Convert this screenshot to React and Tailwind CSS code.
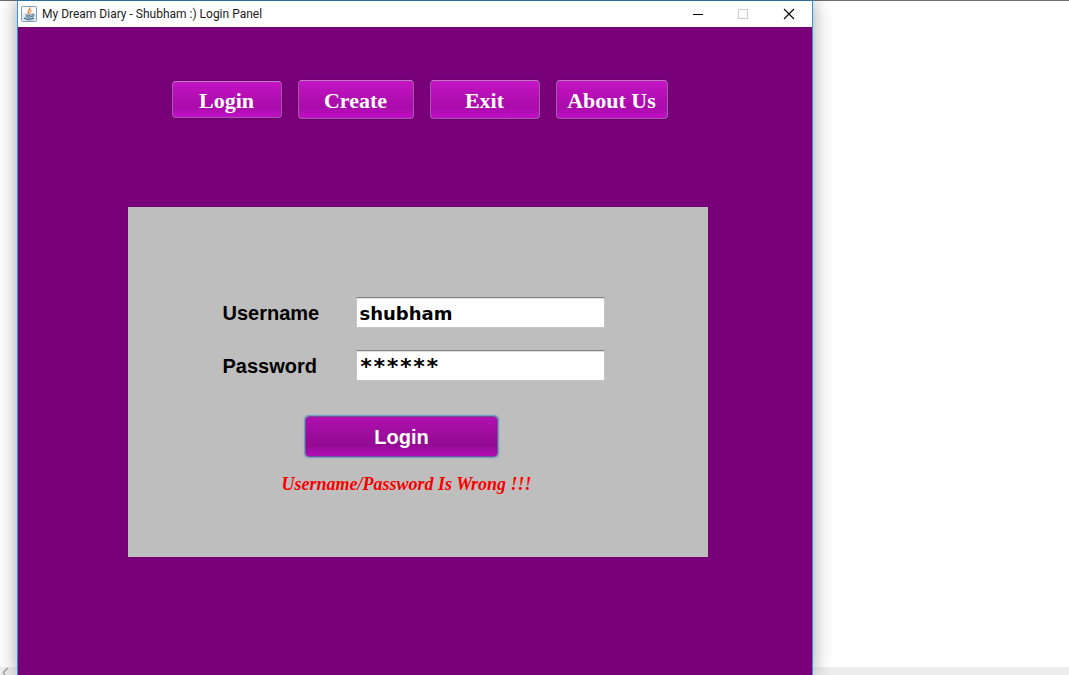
import React, { useState } from "react";

const NAV_BASE =
  "rounded border border-[#a656ac] border-t-[#bd7cc4] bg-linear-to-b from-[#c414c4] via-[#a90ba9] via-70% to-[#c010c6] pt-0.5 font-['Liberation_Serif',serif] text-[22px] leading-6 font-bold whitespace-nowrap text-white shadow-[0_0_2px_#5c005c]";

const NAV_ITEMS = [
  { label: "Login", size: "h-[37px] w-[110px]" },
  { label: "Create", size: "h-[39px] w-[116px]" },
  { label: "Exit", size: "h-[39px] w-[110px]" },
  { label: "About Us", size: "h-[39px] w-[112px]" },
];

function JavaIcon() {
  return (
    <svg width="16" height="16" viewBox="0 0 16 16" aria-hidden="true">
      <rect x="0.5" y="0.5" width="15" height="15" rx="1" fill="#e6ebef" stroke="#7f9db5" />
      <path d="M1 1h14v6H1z" fill="#f7f9fa" />
      <g fill="none" strokeLinecap="round">
        <path d="M9 2C9.6 4 5.6 4.7 7.6 7.8" stroke="#e58a3c" strokeWidth="1.5" />
        <path d="M10.4 4.3C8.4 5.2 9.6 6.2 8.8 7.8" stroke="#e8a367" strokeWidth="1.2" />
        <path d="M4.6 8.8c1.6.6 4.4.6 6.2 0M5.2 10.6c1.4.5 3.6.5 5.2 0" stroke="#557c9c" strokeWidth="1.2" />
        <path d="M11.4 8.4c2-.3 1.7 1.7-.4 2.3" stroke="#557c9c" strokeWidth="1.2" />
        <path d="M3.4 12.2c1.6 1.3 6.8 1.3 9.2 0" stroke="#416b8d" strokeWidth="1.4" />
        <path d="M5 14.1c2 .4 4.8.3 7-.2" stroke="#91aabd" strokeWidth="0.7" />
      </g>
    </svg>
  );
}

function WindowButton({ label, disabled, children }) {
  return (
    <button
      type="button"
      aria-label={label}
      disabled={disabled}
      className="flex h-full w-[46px] items-center justify-center"
    >
      <svg width="12" height="12" viewBox="0 0 12 12" fill="none" aria-hidden="true">
        {children}
      </svg>
    </button>
  );
}

function TitleBar() {
  return (
    <header className="flex h-[26px] items-center bg-white pl-[3px]">
      <JavaIcon />
      <h1 className="flex-1 truncate pl-[5px] font-['Roboto','Noto_Sans',sans-serif] text-[12px] leading-4 text-[#1c1c1c]">
        My Dream Diary - Shubham :) Login Panel
      </h1>
      <div className="flex h-full">
        <WindowButton label="Minimize">
          <path d="M2 6.5h10" stroke="#000" />
        </WindowButton>
        <WindowButton label="Maximize" disabled>
          <rect x="1.5" y="1.5" width="9" height="9" stroke="#cccccc" />
        </WindowButton>
        <WindowButton label="Close">
          <path d="M1 1l10 10M11 1L1 11" stroke="#000" strokeWidth="1.1" />
        </WindowButton>
      </div>
    </header>
  );
}

function Field({ id, label, value, onChange, inputClass }) {
  return (
    <>
      <label htmlFor={id} className="font-['Liberation_Sans',sans-serif] text-[20px] leading-6 font-bold text-black">
        {label}
      </label>
      <input
        id={id}
        type="text"
        autoComplete="off"
        value={value}
        onChange={(event) => onChange(event.target.value)}
        className={`h-[31px] w-full border border-[#c4c4c4] border-t-[#858585] bg-white px-[3px] pt-0.5 font-bold text-black shadow-[inset_0_1px_0_#dddddd] outline-none ${inputClass}`}
      />
    </>
  );
}

function LoginForm() {
  const [username, setUsername] = useState("shubham");
  const [password, setPassword] = useState("******");
  return (
    <form
      onSubmit={(event) => event.preventDefault()}
      className="h-[350px] w-full max-w-[580px] bg-[#bebebe] pt-[90px] pr-[103px] pl-[95px]"
    >
      <div className="grid grid-cols-[133px_1fr] items-center gap-y-[22px]">
        <Field
          id="username"
          label="Username"
          value={username}
          onChange={setUsername}
          inputClass="font-['DejaVu_Sans',sans-serif] text-[18px]"
        />
        <Field
          id="password"
          label="Password"
          value={password}
          onChange={setPassword}
          inputClass="font-['DejaVu_Sans_Mono',monospace] text-[22px]"
        />
      </div>
      <div className="flex flex-col items-center pt-[35px] pr-6">
        <button
          type="submit"
          className="h-[41px] w-[193px] rounded border border-[#76509b] bg-linear-to-b from-[#b010b0] via-[#930b93] via-70% to-[#b20eb4] font-['Liberation_Sans',sans-serif] text-[20px] leading-6 font-bold text-white shadow-[0_0_0_1px_#729fc4,0_0_3px_#7896b0]"
        >
          Login
        </button>
      </div>
      <p
        role="alert"
        className="pt-[15px] pr-[14px] text-center font-['Liberation_Serif',serif] text-[18px] leading-6 font-bold whitespace-nowrap text-[#f80000] italic"
      >
        Username/Password Is Wrong !!!
      </p>
    </form>
  );
}

export default function App() {
  return (
    <div className="flex min-h-screen bg-white">
      <div className="flex w-[17px] shrink-0 flex-col justify-end border-t border-[#6d6d6d]">
        <div className="flex h-2 items-center bg-[#ededed] pl-px">
          <svg width="8" height="8" viewBox="0 0 8 8" fill="none" aria-hidden="true">
            <path d="M7 1L4 3.5L2.5 6L4 8" stroke="#a5a5a5" strokeWidth="1.6" />
          </svg>
        </div>
      </div>
      <div className="relative flex w-full max-w-[796px] flex-col border-x border-t border-x-[#3c8fd0] border-t-[#2f6f9f] bg-[#780078] shadow-[0_0_18px_rgba(0,0,0,0.38)]">
        <TitleBar />
        <main className="flex flex-1 flex-col items-center pt-[53px] pl-[5px]">
          <nav aria-label="Main" className="flex w-full items-center justify-center gap-4 pl-1">
            {NAV_ITEMS.map((item) => (
              <button key={item.label} type="button" className={`${NAV_BASE} ${item.size}`}>
                {item.label}
              </button>
            ))}
          </nav>
          <div className="flex w-full justify-center pt-[88px]">
            <LoginForm />
          </div>
        </main>
      </div>
      <div className="flex flex-1 flex-col justify-end border-t border-[#6d6d6d]">
        <div className="h-2 bg-[#ededed]" />
      </div>
    </div>
  );
}
